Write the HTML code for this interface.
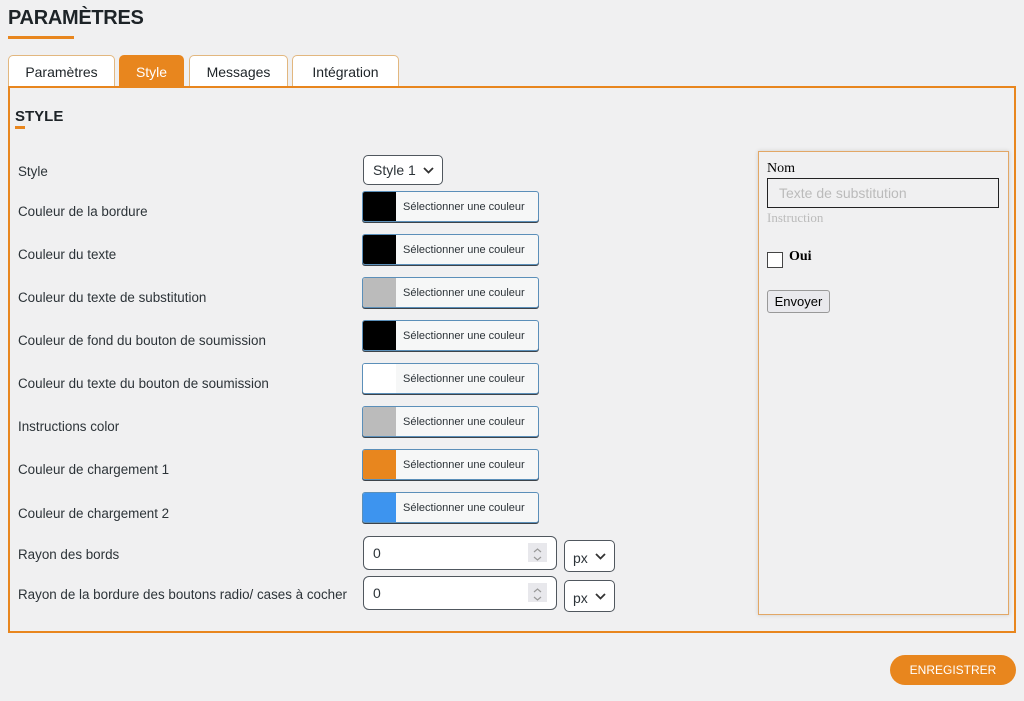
<!DOCTYPE html>
<html><head><meta charset="utf-8"><style>
*{box-sizing:border-box}
body{margin:0;width:1024px;height:701px;background:#f0f0f1;font-family:"Liberation Sans",sans-serif;color:#2c3338;position:relative;overflow:hidden}
.abs{position:absolute}
h1{position:absolute;left:8px;top:7px;margin:0;font-size:20px;font-weight:bold;color:#1d2327;letter-spacing:-0.3px}
.tab{position:absolute;top:55px;height:32px;border:1px solid #e2b77f;border-bottom:none;border-radius:5px 5px 0 0;background:#fff;font-size:14px;text-align:center;line-height:33px;color:#1d2327}
.panel{position:absolute;left:8px;top:86px;width:1008px;height:547px;border:2px solid #e8861e}
.lbl{position:absolute;left:18px;font-size:13.4px;color:#2c3338}
.cp{position:absolute;left:362px;width:177px;height:31px;border:1px solid #5b8fb9;border-radius:3px;background:#f6f7f7;box-shadow:0 1px 0 #3c434a;font-size:11px;color:#2c3338;line-height:30px;overflow:hidden;white-space:nowrap}
.cp i{display:inline-block;width:33px;height:100%;vertical-align:top;margin-right:7px}
.sel{position:absolute;border:1px solid #50575e;border-radius:5px;background:#fff;font-size:14px;padding-left:9px;line-height:28px;color:#2c3338}
.sel svg{position:absolute;right:8px;top:50%;margin-top:-3px}
.num{position:absolute;left:363px;width:194px;height:34px;border:1px solid #50575e;border-radius:6px;background:#fff;font-size:14px;padding-left:9px;line-height:32px}
.spin{position:absolute;right:9px;top:6px;width:19px;height:19px;background:#e8e8ec}
</style></head><body>
<h1>PARAMÈTRES</h1>
<div class="abs" style="left:8px;top:36px;width:66px;height:3px;background:#e8861e"></div>
<div class="tab" style="left:8px;width:107px">Paramètres</div>
<div class="tab" style="left:119px;width:65px;background:#e8861e;border-color:#e8861e;color:#fff">Style</div>
<div class="tab" style="left:189px;width:99px">Messages</div>
<div class="tab" style="left:292px;width:107px">Intégration</div>
<div class="panel"></div>
<div class="abs" style="left:15px;top:108px;font-size:15px;font-weight:bold;color:#1d2327">STYLE</div>
<div class="abs" style="left:15px;top:126px;width:10px;height:3px;background:#e8861e"></div>

<div class="lbl" style="top:164px">Style</div>
<div class="lbl" style="top:204px">Couleur de la bordure</div>
<div class="lbl" style="top:247px">Couleur du texte</div>
<div class="lbl" style="top:290px">Couleur du texte de substitution</div>
<div class="lbl" style="top:333px">Couleur de fond du bouton de soumission</div>
<div class="lbl" style="top:376px">Couleur du texte du bouton de soumission</div>
<div class="lbl" style="top:419px">Instructions color</div>
<div class="lbl" style="top:462px">Couleur de chargement 1</div>
<div class="lbl" style="top:506px">Couleur de chargement 2</div>
<div class="lbl" style="top:547px">Rayon des bords</div>
<div class="lbl" style="top:587px">Rayon de la bordure des boutons radio/ cases à cocher</div>

<div class="sel" style="left:363px;top:155px;width:80px;height:30px">Style 1<svg width="11" height="7" viewBox="0 0 11 7"><path d="M1 1l4.5 4.5L10 1" fill="none" stroke="#333" stroke-width="1.8"/></svg></div>
<div class="cp" style="top:191px"><i style="background:#000"></i>Sélectionner une couleur</div>
<div class="cp" style="top:234px"><i style="background:#000"></i>Sélectionner une couleur</div>
<div class="cp" style="top:277px"><i style="background:#bbb"></i>Sélectionner une couleur</div>
<div class="cp" style="top:320px"><i style="background:#000"></i>Sélectionner une couleur</div>
<div class="cp" style="top:363px"><i style="background:#fff"></i>Sélectionner une couleur</div>
<div class="cp" style="top:406px"><i style="background:#bbb"></i>Sélectionner une couleur</div>
<div class="cp" style="top:449px"><i style="background:#e8861e"></i>Sélectionner une couleur</div>
<div class="cp" style="top:492px"><i style="background:#3d94ef"></i>Sélectionner une couleur</div>

<div class="num" style="top:536px">0<div class="spin"><svg width="19" height="19" viewBox="0 0 19 19"><path d="M6 7l3.5-3 3.5 3M6 12l3.5 3 3.5-3" fill="none" stroke="#999" stroke-width="1.2"/></svg></div></div>
<div class="num" style="top:576px">0<div class="spin"><svg width="19" height="19" viewBox="0 0 19 19"><path d="M6 7l3.5-3 3.5 3M6 12l3.5 3 3.5-3" fill="none" stroke="#999" stroke-width="1.2"/></svg></div></div>
<div class="sel" style="left:564px;top:540px;width:51px;height:32px;line-height:34px;padding-left:8px">px<svg width="11" height="7" viewBox="0 0 11 7"><path d="M1 1l4.5 4.5L10 1" fill="none" stroke="#333" stroke-width="1.8"/></svg></div>
<div class="sel" style="left:564px;top:580px;width:51px;height:32px;line-height:34px;padding-left:8px">px<svg width="11" height="7" viewBox="0 0 11 7"><path d="M1 1l4.5 4.5L10 1" fill="none" stroke="#333" stroke-width="1.8"/></svg></div>

<div class="abs" style="left:758px;top:151px;width:251px;height:464px;border:1px solid #e2a766;box-shadow:0 0 4px rgba(0,0,0,.15);font-family:'Liberation Serif',serif">
  <div class="abs" style="left:8px;top:9px;font-size:14px;color:#000">Nom</div>
  <div class="abs" style="left:8px;top:26px;width:232px;height:30px;border:1px solid #222;font-family:'Liberation Sans',sans-serif;font-size:14px;color:#bbb;padding-left:11px;line-height:29px">Texte de substitution</div>
  <div class="abs" style="left:8px;top:58px;font-size:13px;color:#bbb">Instruction</div>
  <div class="abs" style="left:8px;top:100px;width:16px;height:16px;border:1px solid #444;background:#fff"></div>
  <div class="abs" style="left:30px;top:97px;font-size:14px;color:#000;font-weight:bold">Oui</div>
  <div class="abs" style="left:8px;top:138px;width:63px;height:23px;border:1px solid #999;border-radius:3px;background:#e9e9ed;font-family:'Liberation Sans',sans-serif;font-size:13px;text-align:center;line-height:21px;color:#000">Envoyer</div>
</div>

<div class="abs" style="left:890px;top:655px;width:126px;height:30px;border-radius:15px;background:#e8861e;color:#fff;font-size:12px;text-align:center;line-height:30px">ENREGISTRER</div>
</body></html>
